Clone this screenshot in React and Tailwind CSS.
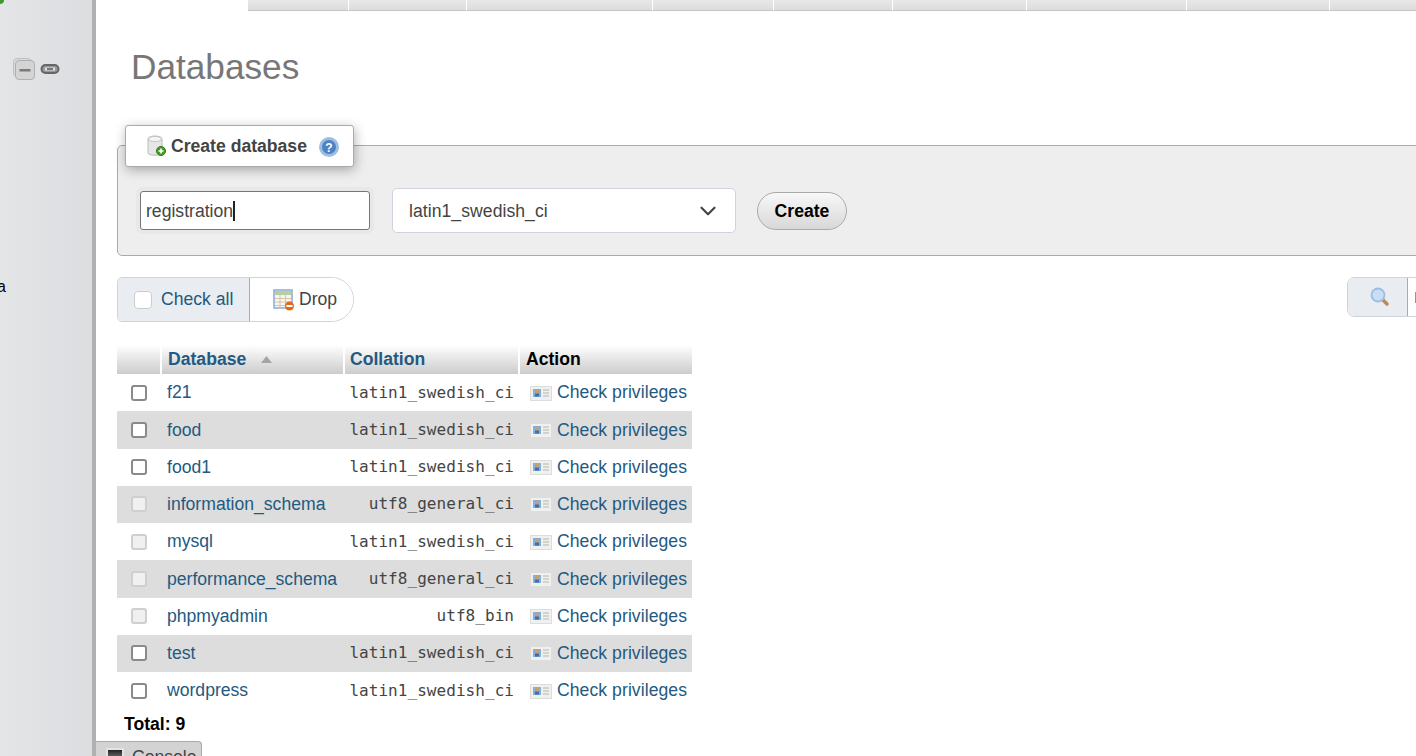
import { ChevronDown } from "lucide-react";

const tabWidths = [101, 118, 186, 121, 119, 134, 160, 143, 100];

const databases = [
  { name: "f21", collation: "latin1_swedish_ci" },
  { name: "food", collation: "latin1_swedish_ci" },
  { name: "food1", collation: "latin1_swedish_ci" },
  { name: "information_schema", collation: "utf8_general_ci", system: true },
  { name: "mysql", collation: "latin1_swedish_ci", system: true },
  { name: "performance_schema", collation: "utf8_general_ci", system: true },
  { name: "phpmyadmin", collation: "utf8_bin", system: true },
  { name: "test", collation: "latin1_swedish_ci" },
  { name: "wordpress", collation: "latin1_swedish_ci" }
];

/* ================= ICONS ================= */

const CollapseIcon = () => (
  <svg width="22" height="22" viewBox="0 0 22 22">
    <rect x="0.500" y="0.500" width="18" height="18" rx="3.500" fill="#dadada" stroke="#c0c0c0" />
    <rect x="2.500" y="2.500" width="19" height="19" rx="3.500" fill="#d4d4d4" stroke="#b0b0b0" />
    <rect x="6.500" y="11" width="11" height="2.500" fill="#7a7a7a" />
  </svg>
);

const LinkIcon = () => (
  <svg width="20" height="12" viewBox="0 0 20 12">
    <rect x="1.500" y="2" width="17" height="8" rx="4" fill="#9a9a9a" stroke="#666" strokeWidth="2" />
    <rect x="5" y="4.500" width="10" height="3" fill="#e0e0e0" />
    <path d="M7 6h6" stroke="#555" strokeWidth="1.500" />
  </svg>
);

const DbPlusIcon = () => (
  <svg width="20" height="22" viewBox="0 0 20 22">
    <path d="M1 4c0-4 14-4 14 0v14c0 3-14 3-14 0z" fill="#e6e6e6" stroke="#bbb" />
    <ellipse cx="8" cy="4" rx="6.500" ry="2.500" fill="#f6f6f6" stroke="#c4c4c4" />
    <circle cx="14" cy="16" r="4.500" fill="#4c9a2a" stroke="#2f7a17" />
    <path d="M11.500 16h5M14 13.500v5" stroke="#fff" strokeWidth="1.600" />
  </svg>
);

const HelpIcon = () => (
  <svg width="20" height="20" viewBox="0 0 20 20">
    <circle cx="10" cy="10" r="10" fill="#9dbde3" />
    <circle cx="10" cy="10" r="7" fill="#4f82c3" />
    <text x="10" y="14.500" textAnchor="middle" fontSize="12" fontWeight="700" fill="#fff" fontFamily="Liberation Sans, sans-serif">?</text>
  </svg>
);

const DropIcon = () => (
  <svg width="22" height="22" viewBox="0 0 22 22">
    <rect x="1" y="1" width="18" height="18" fill="#f4f6f2" stroke="#8aa9d6" strokeWidth="1.500" />
    <rect x="2" y="2" width="16" height="4" fill="#b5cfa0" />
    <path d="M2 9.500h16M2 13h16M2 16.500h16M7 6v13M12.500 6v13" stroke="#d9c4a4" strokeWidth="1" />
    <circle cx="16.500" cy="17" r="4.500" fill="#e0691a" />
    <rect x="13.500" y="16" width="6" height="2" fill="#fff" />
  </svg>
);

const PrivilegesIcon = () => (
  <svg width="22" height="16" viewBox="0 0 22 16">
    <rect x="0.500" y="1.500" width="21" height="14" fill="#f0f0ee" stroke="#ddd" />
    <rect x="3" y="4" width="8" height="8" fill="#7fb0e0" />
    <circle cx="7" cy="6.500" r="2" fill="#d99a5b" />
    <rect x="5" y="8.500" width="4" height="3" fill="#3f6fa6" />
    <path d="M13 5h6M13 8h6M13 11h6" stroke="#b4b4b4" strokeWidth="1.200" />
  </svg>
);

const SearchIcon = () => (
  <svg width="20" height="20" viewBox="0 0 20 20">
    <path d="M12 12l5 5" stroke="#c08a4e" strokeWidth="3.500" strokeLinecap="round" />
    <circle cx="8" cy="8" r="6.500" fill="#c9ddf5" stroke="#9dbde6" strokeWidth="1.800" />
  </svg>
);

const SortIcon = () => (
  <svg width="11" height="7" viewBox="0 0 11 7">
    <path d="M5.500 0l5.500 7H0z" fill="#a5a5a5" />
  </svg>
);

const App = () => {
  return (
    <div className="relative flex h-[756px] w-[1416px] overflow-hidden bg-white font-['Liberation_Sans',Arial,sans-serif] text-[17.6px] text-[#444]">

      {/* NAVIGATION */}

      <aside className="relative w-[96px] shrink-0 border-r-4 border-[#b0b0b0] bg-gradient-to-r from-[#e4e5e7] to-[#dcdde0]">
        <div className="h-[4px] w-[4px] rounded-br-full bg-[#3d9a2a]" />
        <div className="mt-[54px] flex items-center gap-[5px] pl-[13px]">
          <CollapseIcon />
          <LinkIcon />
        </div>
        <div className="mt-[197px] -ml-[3px] text-[16px] leading-[20px] text-black">a</div>
      </aside>

      {/* MAIN */}

      <main className="min-w-0 flex-1 overflow-hidden">

        <div className="ml-[152px] flex h-[11px] w-[1300px]">
          {tabWidths.map((width, index) => (
            <div
              key={index}
              className="shrink-0 border-r border-b border-r-white border-b-[#c4c4c4] bg-gradient-to-b from-[#e8e8e8] to-[#dcdcdc]"
              style={{ width }}
            />
          ))}
        </div>

        <h1 className="mt-[36px] ml-[35px] text-[35.2px] leading-[40px] text-[#777]">
          Databases
        </h1>

        {/* CREATE DATABASE */}

        <div className="mt-[38px] ml-[21px] w-[1400px]">
          <div className="relative z-10 ml-[8px] flex h-[42px] w-[229px] items-center rounded-[3px] border border-[#aaa] bg-white pl-[21px] shadow-[1px_3px_12px_rgba(0,0,0,0.3)]">
            <DbPlusIcon />
            <span className="ml-[4px] text-[17.6px] font-bold text-[#444]">Create database</span>
            <span className="mt-[2px] ml-[12px] flex"><HelpIcon /></span>
          </div>

          <div className="-mt-[22px] flex h-[111px] items-center rounded-[5px] border border-[#aaa] bg-[#eee] pt-[19px] pl-[22px]">
            <div className="flex h-[39px] w-[230px] items-center rounded-[3px] border border-[#767676] bg-white pt-[2px] pl-[5px] text-[17.6px] text-[#444] shadow-[0_0_0_4px_#e8e8e8]">
              <span>registration</span>
              <span className="h-[20px] w-[2px] bg-[#222]" />
            </div>
            <div className="ml-[22px] flex h-[45px] w-[344px] items-center justify-between rounded-[5px] border border-[#d0d3dc] bg-white pt-[2px] pr-[14px] pl-[16px] tracking-[0.05px] text-[#444]">
              <span>latin1_swedish_ci</span>
              <ChevronDown size={26} strokeWidth={2} color="#444" />
            </div>
            <button className="mt-[2px] ml-[21px] h-[38px] w-[90px] rounded-full border border-[#aaa] bg-gradient-to-b from-[#f8f8f8] to-[#d8d8d8] text-[17.6px] font-bold text-black">
              Create
            </button>
          </div>
        </div>

        {/* CHECK ALL + SEARCH */}

        <div className="mt-[21px] ml-[21px] flex w-[1340px] items-start justify-between">
          <div className="flex h-[45px] w-[237px] overflow-hidden rounded-tl-[5px] rounded-tr-[24px] rounded-br-[24px] rounded-bl-[5px] border border-[#d0d3dc]">
            <label className="flex w-[132px] shrink-0 items-center border-r border-[#aaa] bg-[#e9ecf0] pl-[16px] text-[#235a81]">
              <input type="checkbox" className="mr-[9px] h-[18px] w-[18px] appearance-none rounded-[4px] border border-[#ccc] bg-white" />
              Check all
            </label>
            <div className="flex flex-1 items-center bg-white pl-[23px] text-[#444]">
              <DropIcon />
              <span className="ml-[4px]">Drop</span>
            </div>
          </div>
          <div className="flex h-[40px] w-[110px] shrink-0 overflow-hidden rounded-l-[7px] border border-[#d0d3dc]">
            <div className="flex w-[60px] shrink-0 items-center justify-center border-r border-[#aaa] bg-[#e9ecf0] pl-[4px]">
              <SearchIcon />
            </div>
            <div className="flex flex-1 items-center bg-white pl-[7px]">
              <span className="h-[11px] w-[3px] bg-[#c98a3c]" />
            </div>
          </div>
        </div>

        {/* DATABASE TABLE */}

        <table className="mt-[23px] ml-[21px] w-[575px] table-fixed border-collapse">
          <thead>
            <tr className="h-[29px] bg-gradient-to-b from-white to-[#ccc] text-left font-bold">
              <th className="w-[44px] border-r-2 border-white" />
              <th className="w-[183px] border-r-2 border-white pl-[6px] text-[#235a81]">
                <span className="flex items-center">
                  Database
                  <span className="ml-[15px] flex"><SortIcon /></span>
                </span>
              </th>
              <th className="w-[175px] border-r-2 border-white pl-[5px] text-[#235a81]">Collation</th>
              <th className="pl-[6px] text-black">Action</th>
            </tr>
          </thead>
          <tbody>
            {databases.map((db, index) => (
              <tr key={db.name} className={`h-[37.25px] ${index % 2 === 1 ? "bg-[#ddd]" : "bg-white"}`}>
                <td className="pl-[14px]">
                  <input
                    type="checkbox"
                    disabled={db.system}
                    className="block h-[16px] w-[16px] appearance-none rounded-[3px] border-2 border-[#8a8a8a] bg-white disabled:border-[#cfcfcf] disabled:bg-[#f0f0f0]"
                  />
                </td>
                <td className="pl-[6px] whitespace-nowrap text-[#235a81]">{db.name}</td>
                <td className="pr-[5px] text-right font-['DejaVu_Sans_Mono',monospace] text-[16px] tracking-[0.05px] text-[#444]">{db.collation}</td>
                <td className="whitespace-nowrap">
                  <span className="flex items-center pl-[11px] tracking-[0.06px] text-[#235a81]">
                    <PrivilegesIcon />
                    <span className="ml-[5px]">Check privileges</span>
                  </span>
                </td>
              </tr>
            ))}
          </tbody>
        </table>

        <p className="mt-[5px] ml-[28px] text-[17.6px] leading-[20px] font-bold text-black">
          Total: 9
        </p>
      </main>

      {/* CONSOLE TAB */}

      <div className="absolute bottom-0 left-[96px] flex h-[15px] w-[106px] items-start rounded-tr-[4px] border-t border-r border-[#aaa] bg-[#d3d3d3] pt-[6px] pl-[10px] text-[#444]">
        <span className="h-[14px] w-[18px] shrink-0 border-2 border-[#e4e4e4] bg-gradient-to-b from-[#222] to-[#888]" />
        <span className="-mt-[1px] ml-[8px] leading-[20px]">Console</span>
      </div>

    </div>
  );
};

export default App;
